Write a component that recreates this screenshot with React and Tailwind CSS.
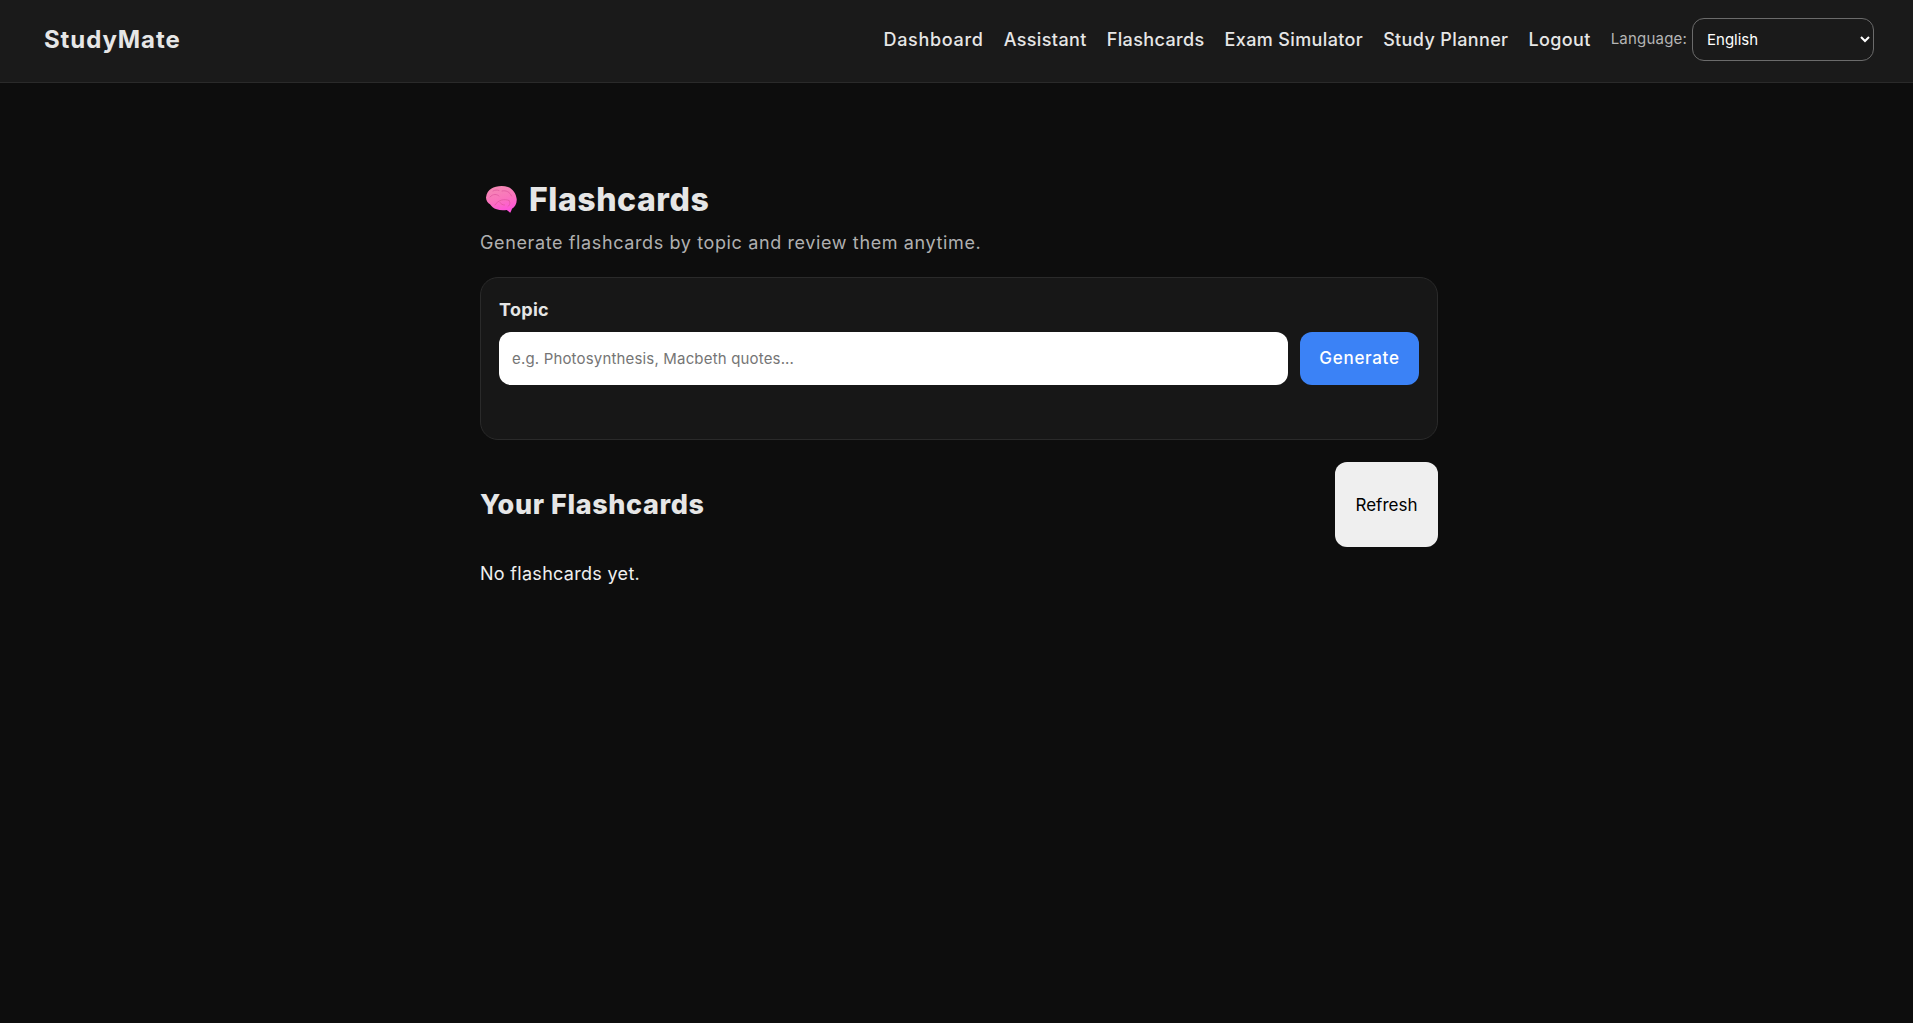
const NAV_LINKS = [
  { label: 'Dashboard', spacing: 'tracking-[0.7px]' },
  { label: 'Assistant', spacing: 'tracking-[0.37px]' },
  { label: 'Flashcards', spacing: 'tracking-[0.37px]' },
  { label: 'Exam Simulator', spacing: 'tracking-[0.37px]' },
  { label: 'Study Planner', spacing: 'tracking-[0.37px]' },
  { label: 'Logout', spacing: 'tracking-[0.37px]' },
];

function BrainIcon() {
  return (
    <svg width="34" height="30" viewBox="0 0 34 30" className="shrink-0" aria-hidden="true">
      <defs>
        <linearGradient id="brain" x1="0.25" y1="0" x2="0.55" y2="1">
          <stop offset="0" stopColor="#f48ab4" />
          <stop offset="0.5" stopColor="#fa74bc" />
          <stop offset="1" stopColor="#ff50dc" />
        </linearGradient>
      </defs>
      <path
        d="M3 12.500C3.500 8 5.500 5 8.500 3.500C12 1 20 .2 25 2C30 4 33 8.500 33.700 14C34 18.500 32 22 29 23.700C28.500 25 28 26.500 27.300 27.700C26 27 25 26 23.700 25C20 25.400 16.500 25.300 13.700 24.300C10.500 23.500 8.500 21.500 7 19.300C5 18 3 16 3 12.500Z"
        fill="url(#brain)"
      />
      <path
        d="M7 12C10 8.500 14 9 16 11M12 20C15 15 21 13.500 26 15.500M19 6C23 5 27 7 28.500 11M10 6C12 4.800 14 4.800 16 5.500M26 15.500C27.500 17.500 27 20 25 21.500M17 17.500C18 19 19.500 20 21.500 20"
        fill="none"
        stroke="#e0589f"
        strokeWidth="0.8"
        strokeLinecap="round"
      />
    </svg>
  );
}

export default function App() {
  return (
    <div className="min-h-screen bg-[#0d0d0d] text-[#e6e6e6] font-['Inter',sans-serif]">
      <header className="flex h-[83px] items-center justify-between border-b border-[#2a2a2a] bg-[#1a1a1a] pb-[3px] pl-[44px] pr-[39px]">
        <div className="text-[24px] font-bold tracking-[0.9px] text-[#e6e6e6]">StudyMate</div>
        <nav className="flex items-center gap-[20px]">
          {NAV_LINKS.map((link) => (
            <a key={link.label} href="#" className={`text-[18px] font-medium text-[#e6e6e6] ${link.spacing}`}>
              {link.label}
            </a>
          ))}
          <div className="flex items-center gap-[5px]">
            <span className="text-[15px] tracking-[0.2px] text-[#b5b5b5]">Language:</span>
            <select className="h-[43px] w-[182px] rounded-[12px] border border-[#6b6b6b] bg-[#1a1a1a] px-[10px] text-[15px] text-white">
              <option>English</option>
            </select>
          </div>
        </nav>
      </header>

      <main className="mx-auto w-[963px] pl-[5px] pt-[93px]">
        <h1 className="flex items-center gap-[12px] pl-[3px] text-[32px] leading-[48px] font-extrabold tracking-[0.55px] text-[#e6e6e6]">
          <BrainIcon />
          Flashcards
        </h1>
        <p className="mt-[5px] text-[18px] leading-[27px] tracking-[0.62px] text-[#b0b0b0]">
          Generate flashcards by topic and review them anytime.
        </p>

        <section className="mt-[21px] h-[163px] rounded-[18px] border border-[#2a2a2a] bg-[#171717] px-[18px] pt-[18px]">
          <label className="block text-[18px] leading-[27px] font-bold tracking-[0.3px] text-[#e6e6e6]">Topic</label>
          <div className="mt-[9px] flex gap-[12px]">
            <input
              type="text"
              placeholder="e.g. Photosynthesis, Macbeth quotes..."
              className="h-[53px] flex-1 rounded-[12px] bg-white px-[13px] text-[15px] tracking-[0.17px] text-black placeholder:text-[#757575] outline-none"
            />
            <button className="h-[53px] w-[119px] rounded-[12px] bg-[#3b82f6] text-[17px] font-medium tracking-[0.7px] text-white">
              Generate
            </button>
          </div>
        </section>

        <div className="mt-[22px] flex items-center justify-between">
          <h2 className="pt-[2px] text-[27px] font-extrabold tracking-[0.6px] text-[#e6e6e6]">Your Flashcards</h2>
          <button className="h-[85px] w-[103px] rounded-[12px] bg-[#efefef] pt-[3px] text-[17px] text-black">Refresh</button>
        </div>

        <p className="mt-[13px] text-[18px] leading-[27px] tracking-[0.3px] text-[#efefef]">No flashcards yet.</p>
      </main>
    </div>
  );
}
